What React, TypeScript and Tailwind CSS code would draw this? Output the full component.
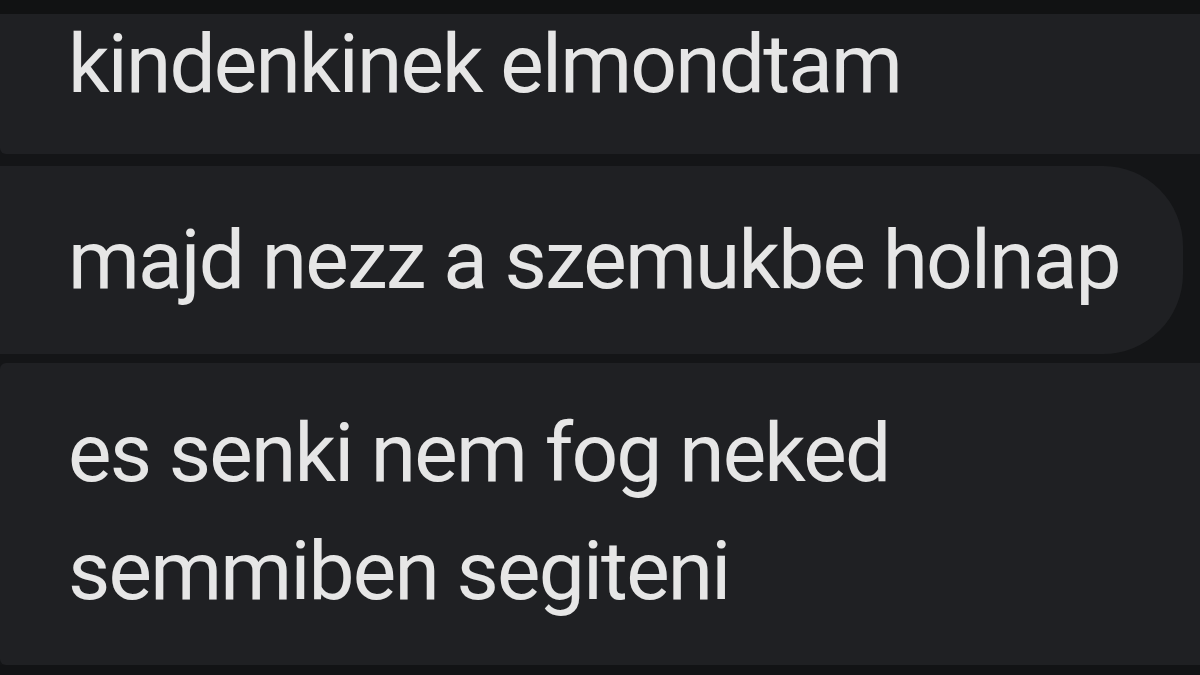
export default function App() {
  const font = { fontFamily: 'Roboto, "Noto Sans", sans-serif' };
  return (
    <div className="w-[1200px] h-[675px] overflow-hidden bg-[#141517] flex flex-col" style={font}>
      <div className="h-[14px] bg-[#111213] shrink-0" />
      <div className="h-[140px] shrink-0 bg-[#1f2023] rounded-bl-[6px] pl-[68px] text-[82px] leading-[100px] tracking-[-1.8px] text-[#e6e6e6] whitespace-nowrap">
        kindenkinek elmondtam
      </div>
      <div className="h-[12px] shrink-0" />
      <div className="h-[188px] w-[1183px] shrink-0 bg-[#1f2023] rounded-r-[80px] pl-[68px] pt-[44px] text-[82px] leading-[100px] tracking-[-1.8px] text-[#e6e6e6] whitespace-nowrap">
        majd nezz a szemukbe holnap
      </div>
      <div className="h-[9px] shrink-0" />
      <div className="h-[302px] shrink-0 bg-[#1f2023] rounded-l-[6px] pl-[68px] pt-[31px] text-[82px] leading-[118px] tracking-[-1.8px] text-[#e6e6e6] whitespace-nowrap">
        <div>es senki nem fog neked</div>
        <div>semmiben segiteni</div>
      </div>
      <div className="flex-1 bg-[#121315]" />
    </div>
  );
}
